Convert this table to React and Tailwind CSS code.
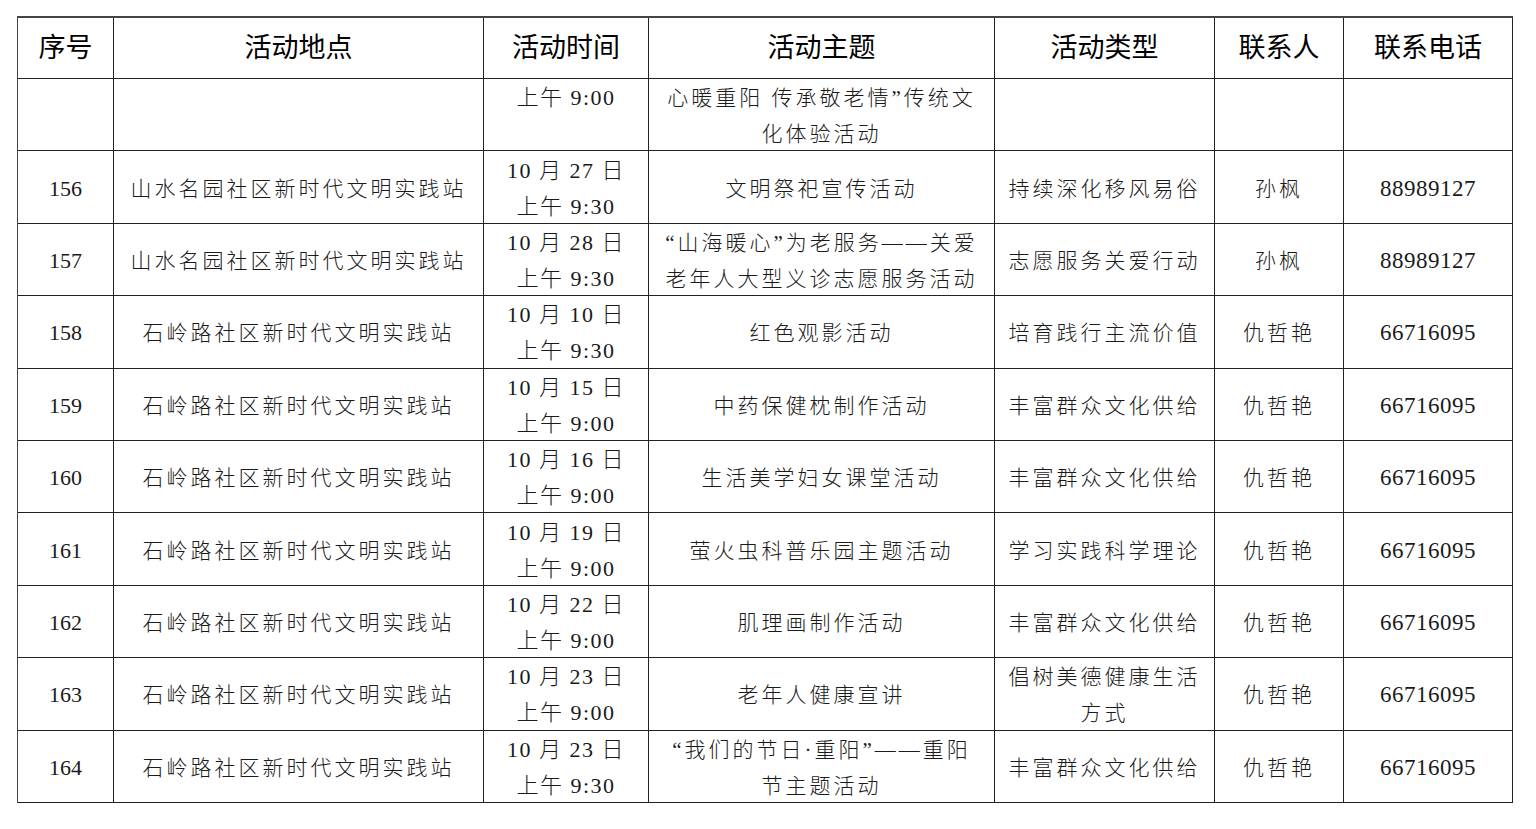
import React from "react";

const rows = [
  { no: "", place: "", time: ["上午 9:00", ""], theme: ["心暖重阳 传承敬老情”传统文", "化体验活动"], type: [""], person: "", phone: "" },
  { no: "156", place: "山水名园社区新时代文明实践站", time: ["10 月 27 日", "上午 9:30"], theme: ["文明祭祀宣传活动"], type: ["持续深化移风易俗"], person: "孙枫", phone: "88989127" },
  { no: "157", place: "山水名园社区新时代文明实践站", time: ["10 月 28 日", "上午 9:30"], theme: ["“山海暖心”为老服务——关爱", "老年人大型义诊志愿服务活动"], type: ["志愿服务关爱行动"], person: "孙枫", phone: "88989127" },
  { no: "158", place: "石岭路社区新时代文明实践站", time: ["10 月 10 日", "上午 9:30"], theme: ["红色观影活动"], type: ["培育践行主流价值"], person: "仇哲艳", phone: "66716095" },
  { no: "159", place: "石岭路社区新时代文明实践站", time: ["10 月 15 日", "上午 9:00"], theme: ["中药保健枕制作活动"], type: ["丰富群众文化供给"], person: "仇哲艳", phone: "66716095" },
  { no: "160", place: "石岭路社区新时代文明实践站", time: ["10 月 16 日", "上午 9:00"], theme: ["生活美学妇女课堂活动"], type: ["丰富群众文化供给"], person: "仇哲艳", phone: "66716095" },
  { no: "161", place: "石岭路社区新时代文明实践站", time: ["10 月 19 日", "上午 9:00"], theme: ["萤火虫科普乐园主题活动"], type: ["学习实践科学理论"], person: "仇哲艳", phone: "66716095" },
  { no: "162", place: "石岭路社区新时代文明实践站", time: ["10 月 22 日", "上午 9:00"], theme: ["肌理画制作活动"], type: ["丰富群众文化供给"], person: "仇哲艳", phone: "66716095" },
  { no: "163", place: "石岭路社区新时代文明实践站", time: ["10 月 23 日", "上午 9:00"], theme: ["老年人健康宣讲"], type: ["倡树美德健康生活", "方式"], person: "仇哲艳", phone: "66716095" },
  { no: "164", place: "石岭路社区新时代文明实践站", time: ["10 月 23 日", "上午 9:30"], theme: ["“我们的节日·重阳”——重阳", "节主题活动"], type: ["丰富群众文化供给"], person: "仇哲艳", phone: "66716095" },
];

const headers = ["序号", "活动地点", "活动时间", "活动主题", "活动类型", "联系人", "联系电话"];

const body = { fontFamily: '"Liberation Serif", "Noto Sans CJK SC", serif' };
const head = { fontFamily: '"Noto Sans CJK SC", sans-serif' };

function Cell({ lines, track = "tracking-[3px]", size = "text-[21px]", className = "" }) {
  return (
    <div className={`border-r border-b border-[#222] flex flex-col items-center justify-center text-center leading-[36px] pt-[3px] text-[#1a1a1a] font-light overflow-hidden ${track} ${size} ${className}`}>
      {lines.map((l, i) => (
        <div key={i} className="whitespace-nowrap h-[36px] shrink-0">{l}</div>
      ))}
    </div>
  );
}

export default function App() {
  return (
    <div className="w-[1536px] h-[829px] bg-white pt-[16px] pl-[17px]" style={body}>
      <div className="grid grid-cols-[96px_370px_165px_346px_220px_129px_169px] grid-rows-[61px] auto-rows-[72.4px] border-t-2 border-l border-[#444] w-[1496px]">
        {headers.map((h) => (
          <div key={h} style={head} className="pb-[3px] border-r border-b border-[#222] flex items-center justify-center text-[27px] font-normal text-black">
            {h}
          </div>
        ))}
        {rows.map((r, i) => (
          <React.Fragment key={i}>
            <Cell lines={[r.no]} track="tracking-normal" size="text-[22px]" />
            <Cell lines={[r.place]} />
            <Cell lines={r.time} track="tracking-[1.5px]" size="text-[22px]" />
            <Cell lines={r.theme} />
            <Cell lines={r.type} />
            <Cell lines={[r.person]} />
            <Cell lines={[r.phone]} track="tracking-[0.5px]" size="text-[23px]" />
          </React.Fragment>
        ))}
      </div>
    </div>
  );
}
